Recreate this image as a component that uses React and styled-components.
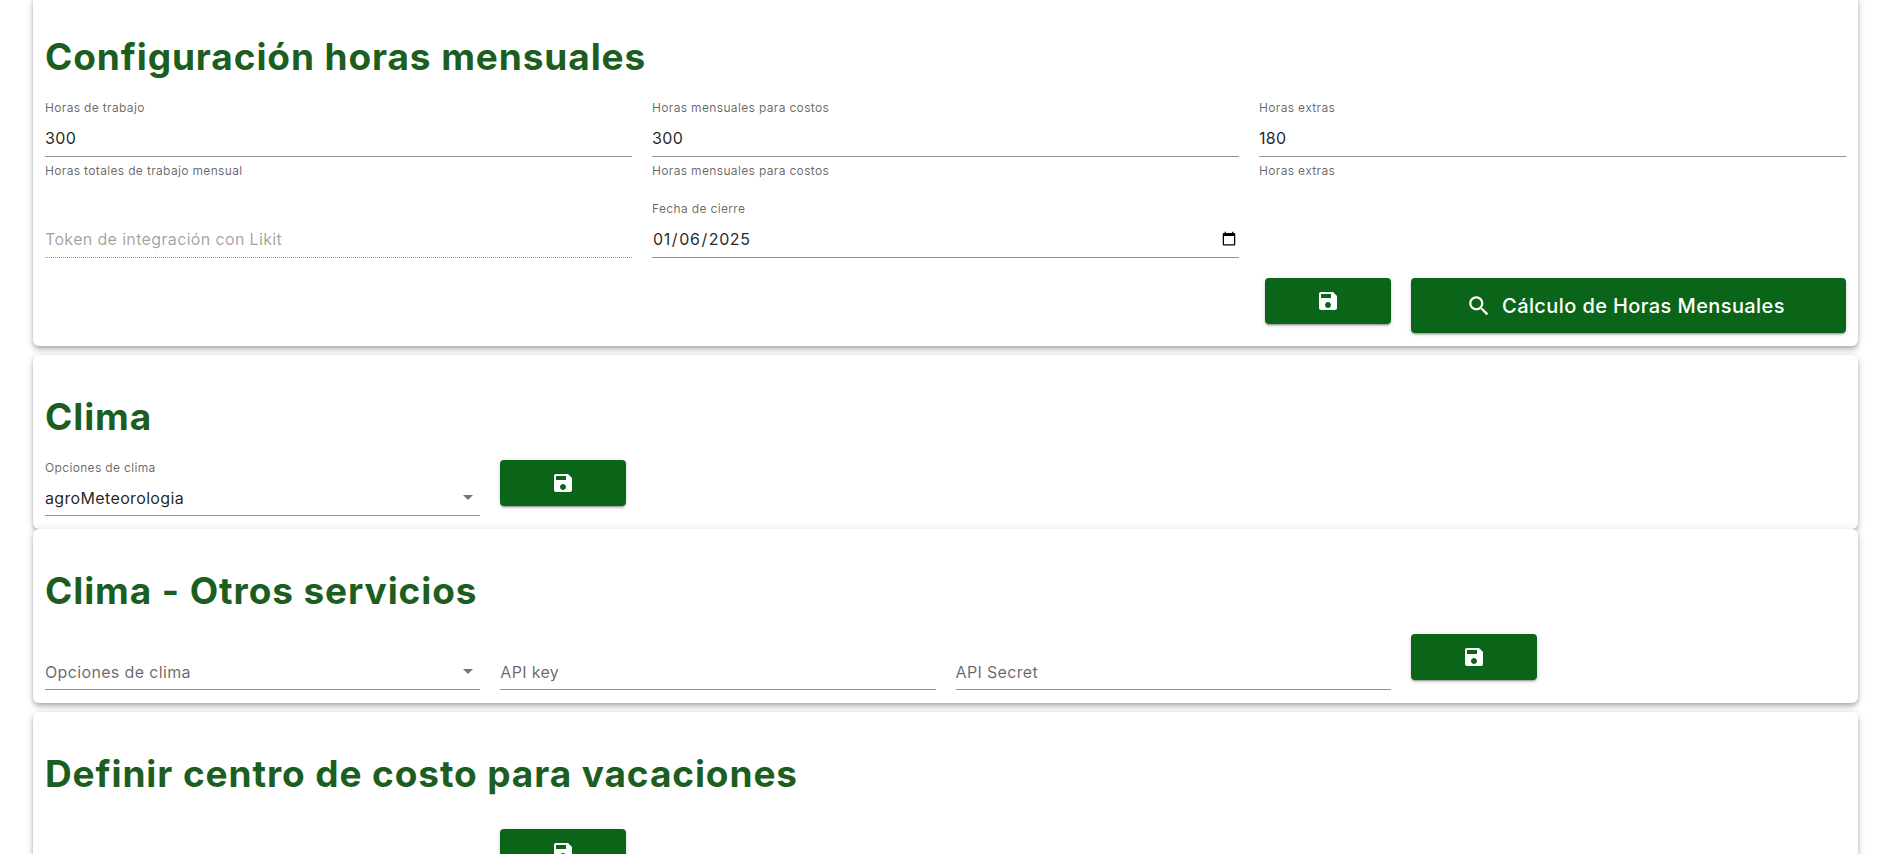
import styled, { createGlobalStyle } from "styled-components";

const GlobalStyle = createGlobalStyle`
  html, body {
    margin: 0;
    height: 854px;
    overflow: hidden;
    background-color: #fff;
    font-family: "Inter", "Liberation Sans", sans-serif;
  }
`;

const SaveIcon = () => (
  <Glyph viewBox="0 0 24 24" $size="24px">
    <path d="M17 3H5c-1.11 0-2 .9-2 2v14c0 1.1.89 2 2 2h14c1.1 0 2-.9 2-2V7l-4-4zm-5 16c-1.66 0-3-1.34-3-3s1.34-3 3-3 3 1.34 3 3-1.34 3-3 3zm3-10H5V5h10v4z" />
  </Glyph>
);

const SearchIcon = () => (
  <Glyph viewBox="0 0 24 24" $size="26px">
    <path d="M15.5 14h-.79l-.28-.27C15.41 12.59 16 11.11 16 9.5 16 5.91 13.09 3 9.5 3S3 5.91 3 9.5 5.91 16 9.5 16c1.61 0 3.09-.59 4.23-1.57l.27.28v.79l5 4.99L20.49 19l-4.99-5zm-6 0C7.01 14 5 11.99 5 9.5S7.01 5 9.5 5 14 7.01 14 9.5 11.99 14 9.5 14z" />
  </Glyph>
);

const Field = ({ label, value, helper, placeholder, type = "text", disabled, select }) => (
  <FieldBox>
    <Label>{label}</Label>
    <InputRow $disabled={disabled}>
      <Input
        type={type}
        defaultValue={value}
        placeholder={placeholder}
        disabled={disabled}
        readOnly={select}
        $muted={!disabled && placeholder}
      />
      {select && (
        <Caret viewBox="0 0 24 24" $size="24px">
          <path d="M7 10l5 5 5-5z" />
        </Caret>
      )}
    </InputRow>
    {helper && <Helper>{helper}</Helper>}
  </FieldBox>
);

const App = () => {
  return (
    <Page>
      <GlobalStyle />
      <Card>
        <Title>Configuración horas mensuales</Title>
        <ThreeCols>
          <Field label="Horas de trabajo" value="300" helper="Horas totales de trabajo mensual" />
          <Field label="Horas mensuales para costos" value="300" helper="Horas mensuales para costos" />
          <Field label="Horas extras" value="180" helper="Horas extras" />
          <Field placeholder="Token de integración con Likit" disabled />
          <Field label="Fecha de cierre" type="date" value="2025-01-06" />
        </ThreeCols>
        <Actions>
          <SaveButton>
            <SaveIcon />
          </SaveButton>
          <WideButton>
            <SearchIcon />
            Cálculo de Horas Mensuales
          </WideButton>
        </Actions>
      </Card>

      <Card $flush>
        <Title>Clima</Title>
        <FourCols>
          <Field label="Opciones de clima" value="agroMeteorologia" select />
          <SaveButton>
            <SaveIcon />
          </SaveButton>
        </FourCols>
      </Card>

      <Card>
        <Title>Clima - Otros servicios</Title>
        <FourCols>
          <Field placeholder="Opciones de clima" select />
          <Field placeholder="API key" />
          <Field placeholder="API Secret" />
          <SaveButton>
            <SaveIcon />
          </SaveButton>
        </FourCols>
      </Card>

      <Card>
        <Title>Definir centro de costo para vacaciones</Title>
        <FourCols $drop>
          <div />
          <SaveButton>
            <SaveIcon />
          </SaveButton>
        </FourCols>
      </Card>
    </Page>
  );
};

export default App;

const Page = styled.div`
  margin: -5px 42px 0 33px;
`;

const Card = styled.section`
  background-color: #fff;
  border-radius: 6px;
  padding: 0 12px 13px;
  margin-bottom: ${(props) => (props.$flush ? "0" : "9px")};
  box-shadow: 0 2px 4px -1px rgba(0, 0, 0, 0.2), 0 4px 5px 0 rgba(0, 0, 0, 0.14),
    0 1px 10px 0 rgba(0, 0, 0, 0.12);
`;

const Title = styled.h2`
  margin: 0;
  height: 105px;
  box-sizing: border-box;
  padding-top: 40px;
  font-size: 37px;
  line-height: 44px;
  font-weight: 700;
  letter-spacing: 0.9px;
  color: #1b5e20;
`;

const FieldBox = styled.div`
  display: flex;
  flex-direction: column;
  min-width: 0;
`;

const Label = styled.label`
  display: block;
  height: 16px;
  margin-bottom: 8px;
  font-size: 12px;
  line-height: 16px;
  letter-spacing: 0.34px;
  color: rgba(0, 0, 0, 0.6);
`;

const InputRow = styled.div`
  display: flex;
  align-items: center;
  box-sizing: border-box;
  height: 32px;
  padding-bottom: 3px;
  border-bottom: 1px ${(props) => (props.$disabled ? "dotted" : "solid")} rgba(0, 0, 0, 0.42);
`;

const Input = styled.input`
  flex: 1;
  min-width: 0;
  height: 100%;
  padding: 0;
  border: none;
  outline: none;
  background: transparent;
  font-family: inherit;
  font-size: 16px;
  letter-spacing: 0.35px;
  color: rgba(0, 0, 0, 0.87);

  &[type="date"] {
    letter-spacing: 0.6px;
  }

  &::placeholder {
    color: rgba(0, 0, 0, ${(props) => (props.$muted ? "0.6" : "0.38")});
    opacity: 1;
  }
`;

const Helper = styled.p`
  margin: 6px 0 0;
  height: 16px;
  font-size: 12px;
  line-height: 16px;
  letter-spacing: 0.34px;
  color: rgba(0, 0, 0, 0.6);
`;

const ThreeCols = styled.div`
  display: grid;
  grid-template-columns: repeat(3, 1fr);
  column-gap: 20px;
  row-gap: 22px;

  ${InputRow} {
    height: 33px;
    padding-bottom: 4px;
  }
`;

const FourCols = styled.div`
  display: grid;
  grid-template-columns: repeat(4, 1fr);
  column-gap: 20px;
  padding-top: ${(props) => (props.$drop ? "12px" : "0")};
`;

const Glyph = styled.svg`
  width: ${(props) => props.$size};
  height: ${(props) => props.$size};
  fill: currentColor;
  flex-shrink: 0;
`;

const Caret = styled(Glyph)`
  margin-bottom: 3px;
  color: rgba(0, 0, 0, 0.54);
`;

const Actions = styled.div`
  display: flex;
  justify-content: flex-end;
  align-items: flex-start;
  gap: 20px;
  margin-top: 20px;
`;

const BaseButton = styled.button`
  display: flex;
  align-items: center;
  justify-content: center;
  border: none;
  border-radius: 4px;
  background-color: #0b6518;
  color: #fff;
  font-family: inherit;
  box-shadow: 0 3px 1px -2px rgba(0, 0, 0, 0.2), 0 2px 2px 0 rgba(0, 0, 0, 0.14),
    0 1px 5px 0 rgba(0, 0, 0, 0.12);
`;

const SaveButton = styled(BaseButton)`
  width: 126px;
  height: 46px;
`;

const WideButton = styled(BaseButton)`
  width: 435px;
  height: 55px;
  gap: 10px;
  padding: 0 6px 0 0;
  font-size: 20px;
  font-weight: 500;
  letter-spacing: 0.4px;
`;
